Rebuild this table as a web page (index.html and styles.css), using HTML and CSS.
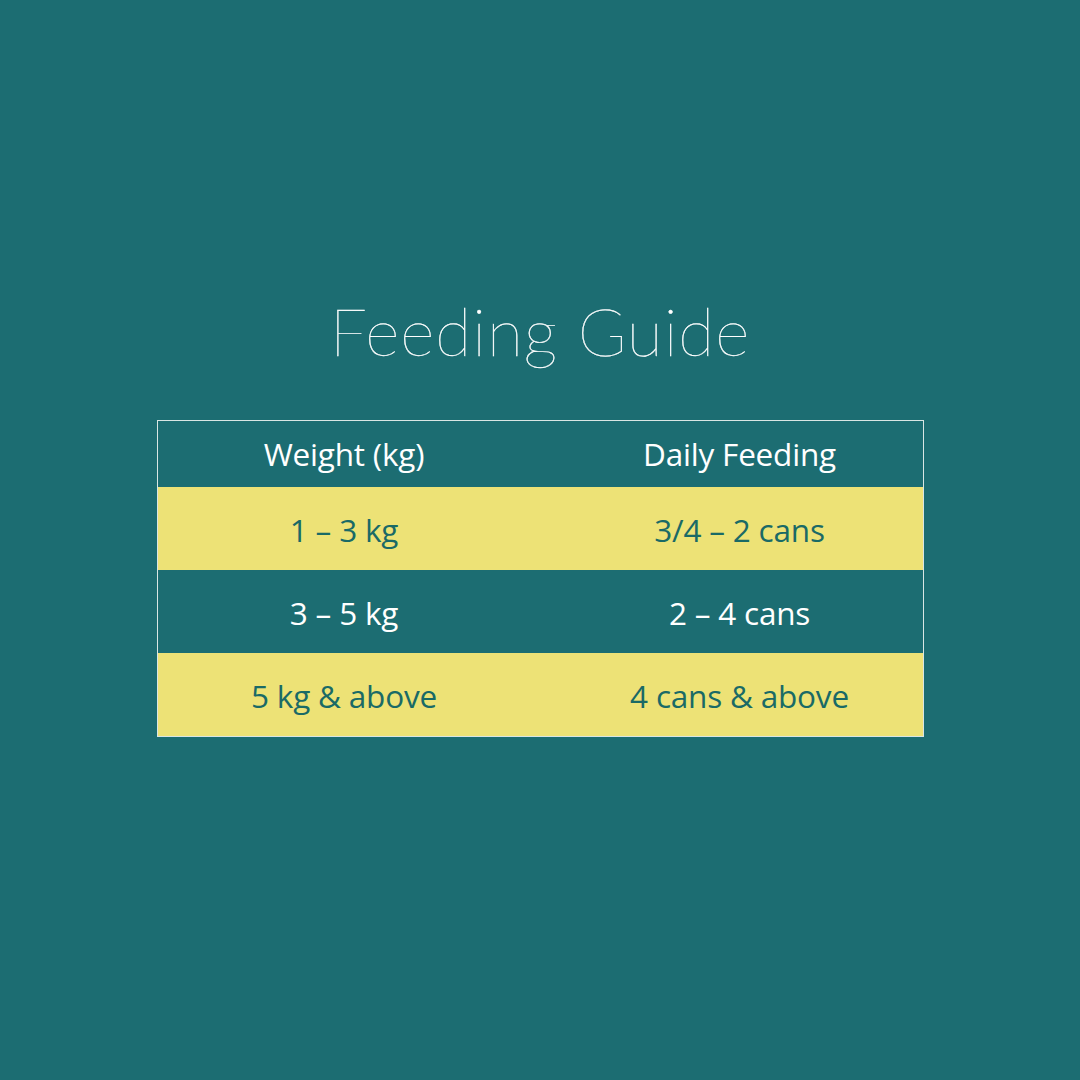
FILE: index.html
```html
<!DOCTYPE html>
<html>
<head>
<meta charset="utf-8">
<link rel="stylesheet" href="styles.css">
</head>
<body>
<main class="page">
  <h1 class="title">Feeding Guide</h1>
  <div class="table">
    <div class="row head">
      <div class="cell c1">Weight (kg)</div>
      <div class="cell c2">Daily Feeding</div>
    </div>
    <div class="row yellow">
      <div class="cell c1">1 – 3 kg</div>
      <div class="cell c2">3/4 – 2 cans</div>
    </div>
    <div class="row teal">
      <div class="cell c1">3 – 5 kg</div>
      <div class="cell c2">2 – 4 cans</div>
    </div>
    <div class="row yellow">
      <div class="cell c1">5 kg &amp; above</div>
      <div class="cell c2">4 cans &amp; above</div>
    </div>
  </div>
</main>
</body>
</html>
```
FILE: styles.css
```css
html, body {
  margin: 0;
  padding: 0;
  background: #1c6d72;
}
.page {
  width: 1080px;
  height: 1080px;
  display: flex;
  flex-direction: column;
  align-items: center;
  padding-top: 291px;
  box-sizing: border-box;
}
.title {
  margin: 0;
  font-family: "Lato", sans-serif;
  font-weight: 100;
  font-size: 66px;
  line-height: 80px;
  color: #ffffff;
  letter-spacing: 1px;
  -webkit-text-stroke: 0.4px #ffffff;
}
.table {
  margin-top: 49px;
  width: 767px;
  border: 1px solid #d9e6e4;
  box-sizing: border-box;
  font-family: "Open Sans", sans-serif;
  font-size: 31.5px;
  letter-spacing: -0.2px;
}
.row {
  display: grid;
  grid-template-columns: 373px 1fr;
  height: 83px;
  align-items: center;
}
.row.head {
  height: 66px;
  color: #ffffff;
}
.row.head .cell {
  padding-top: 0;
}
.row.yellow {
  background: #ede276;
  color: #1a6a66;
}
.row.teal {
  color: #ffffff;
}
.cell {
  text-align: center;
  line-height: 40px;
  padding-top: 3px;
}
.c2 {
  padding-left: 26px;
}
```
